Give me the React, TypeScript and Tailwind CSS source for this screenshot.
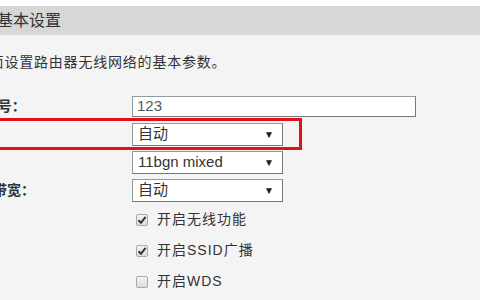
import React from "react";

const font = { fontFamily: '"Liberation Sans", "Noto Sans CJK SC", sans-serif' };

function Select({ value }: { value: string }) {
  return (
    <div className="flex h-[23px] w-[151px] items-center justify-between border border-[#8e9c9b] border-r-[#6f7b7a] border-b-[#6f7b7a] bg-white pl-[5px] pr-[8px] text-[15px] text-[#333]">
      <span>{value}</span>
      <span className="text-[10px] text-[#222]">▼</span>
    </div>
  );
}

function Check({ checked, label }: { checked: boolean; label: string }) {
  return (
    <div className="flex h-[31px] items-center">
      <div className="ml-[4px] flex h-[12px] w-[12px] items-center justify-center rounded-[2px] border border-[#a9a9a9] bg-gradient-to-b from-[#f4f4f4] to-[#dcdcdc]">
        {checked && (
          <svg width="10" height="10" viewBox="0 0 10 10">
            <path d="M1.5 5.2 L4 7.8 L8.6 1.8" fill="none" stroke="#333" strokeWidth="2" />
          </svg>
        )}
      </div>
      <span className="ml-[9px] text-[14px] tracking-[1px] text-[#333]">{label}</span>
    </div>
  );
}

function Label({ text }: { text: string }) {
  return <div className="-ml-[35px] w-[167px] text-[14px] font-bold text-[#2e3443]">{text}</div>;
}

export default function App() {
  return (
    <div className="relative h-[300px] w-[480px] overflow-hidden bg-[#f4f4f4]" style={font}>
      <div className="h-[6px] bg-white" />
      <div className="flex h-[29px] items-center bg-[#d7d7d7] text-[16px] text-[#333]">
        <span className="-ml-[3px]">基本设置</span>
      </div>
      <div className="mt-[17px] -ml-[40px] text-[14px] leading-[20px] tracking-[0.8px] text-[#333]">
        本页面设置路由器无线网络的基本参数。
      </div>
      <div className="mt-[20px]">
        <div className="flex h-[28px] items-center">
          <Label text="SSID号：" />
          <div className="flex h-[21px] w-[284px] items-center border border-[#8e9c9b] border-r-[#6f7b7a] border-b-[#6f7b7a] bg-white pl-[4px] text-[15px] text-[#4b5d5d]">
            123
          </div>
        </div>
        <div className="flex h-[28px] items-center">
          <Label text="信道：" />
          <Select value="自动" />
        </div>
        <div className="flex h-[28px] items-center">
          <Label text="模式：" />
          <Select value="11bgn mixed" />
        </div>
        <div className="flex h-[28px] items-center">
          <Label text="频段带宽：" />
          <Select value="自动" />
        </div>
      </div>
      <div className="pl-[132px]">
        <Check checked label="开启无线功能" />
        <Check checked label="开启SSID广播" />
        <Check checked={false} label="开启WDS" />
      </div>
      <div className="absolute left-[-10px] top-[118px] h-[32px] w-[312px] border-[3px] border-[#e3101a]" />
    </div>
  );
}
